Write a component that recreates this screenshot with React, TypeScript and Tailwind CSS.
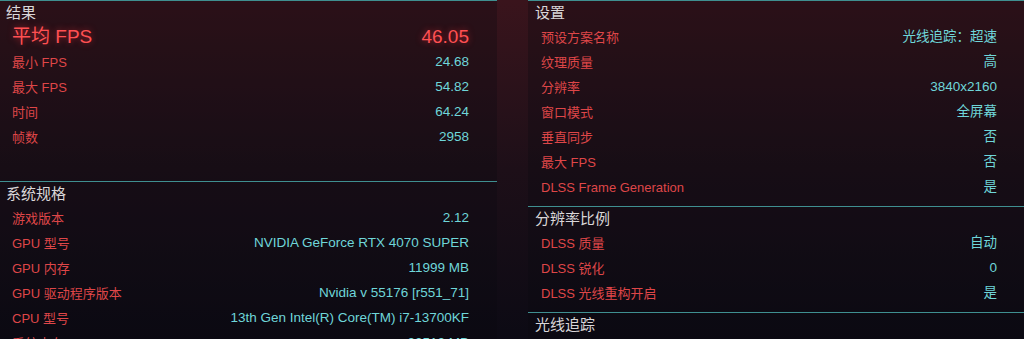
import React from "react";

type Row = { label: string; value: string };

const results: Row[] = [
  { label: "最小 FPS", value: "24.68" },
  { label: "最大 FPS", value: "54.82" },
  { label: "时间", value: "64.24" },
  { label: "帧数", value: "2958" },
];

const specs: Row[] = [
  { label: "游戏版本", value: "2.12" },
  { label: "GPU 型号", value: "NVIDIA GeForce RTX 4070 SUPER" },
  { label: "GPU 内存", value: "11999 MB" },
  { label: "GPU 驱动程序版本", value: "Nvidia v 55176 [r551_71]" },
  { label: "CPU 型号", value: "13th Gen Intel(R) Core(TM) i7-13700KF" },
  { label: "系统内存", value: "32512 MB" },
];

const settings: Row[] = [
  { label: "预设方案名称", value: "光线追踪：超速" },
  { label: "纹理质量", value: "高" },
  { label: "分辨率", value: "3840x2160" },
  { label: "窗口模式", value: "全屏幕" },
  { label: "垂直同步", value: "否" },
  { label: "最大 FPS", value: "否" },
  { label: "DLSS Frame Generation", value: "是" },
];

const scaling: Row[] = [
  { label: "DLSS 质量", value: "自动" },
  { label: "DLSS 锐化", value: "0" },
  { label: "DLSS 光线重构开启", value: "是" },
];

const Header = ({ title, pad }: { title: string; pad: string }) => (
  <div className={`border-t border-[#3f8f90] h-[25px] shrink-0 flex items-center text-[15px] text-[#d9d6d8] ${pad}`}>
    {title}
  </div>
);

const Rows = ({ rows, pad }: { rows: Row[]; pad: string }) => (
  <div className={`flex flex-col shrink-0 ${pad}`}>
    {rows.map((r) => (
      <div key={r.label} className="h-[25px] flex items-center justify-between text-[13px]">
        <span className="text-[#de4648]">{r.label}</span>
        <span className="text-[13.5px] text-[#6fd6d9]">{r.value}</span>
      </div>
    ))}
  </div>
);

export default function App() {
  return (
    <div
      className="w-[1024px] h-[339px] overflow-hidden flex gap-[31px] bg-gradient-to-b from-[#3a141c] via-[#1d0f18] to-[#0c0a14]"
      style={{ fontFamily: '"Liberation Sans", "Noto Sans CJK SC", sans-serif' }}
    >
      <div className="w-[497px] shrink-0 flex flex-col bg-[#0a0912]/30">
        <div className="h-[181px] shrink-0 flex flex-col">
          <Header title="结果" pad="pl-[6px]" />
          <div className="h-[25px] shrink-0 flex items-center justify-between pl-[12px] pr-[28px] text-[19px] text-[#ff5052] [text-shadow:0_0_6px_rgba(255,50,60,0.55)]">
            <span>平均 FPS</span>
            <span>46.05</span>
          </div>
          <Rows rows={results} pad="pl-[12px] pr-[28px]" />
        </div>
        <Header title="系统规格" pad="pl-[6px]" />
        <Rows rows={specs} pad="pl-[12px] pr-[28px]" />
      </div>
      <div className="w-[496px] shrink-0 flex flex-col bg-[#0a0912]/30">
        <Header title="设置" pad="pl-[7px]" />
        <Rows rows={settings} pad="pl-[13px] pr-[27px]" />
        <div className="h-[6px] shrink-0" />
        <Header title="分辨率比例" pad="pl-[7px]" />
        <Rows rows={scaling} pad="pl-[13px] pr-[27px]" />
        <div className="h-[6px] shrink-0" />
        <Header title="光线追踪" pad="pl-[7px]" />
      </div>
    </div>
  );
}
